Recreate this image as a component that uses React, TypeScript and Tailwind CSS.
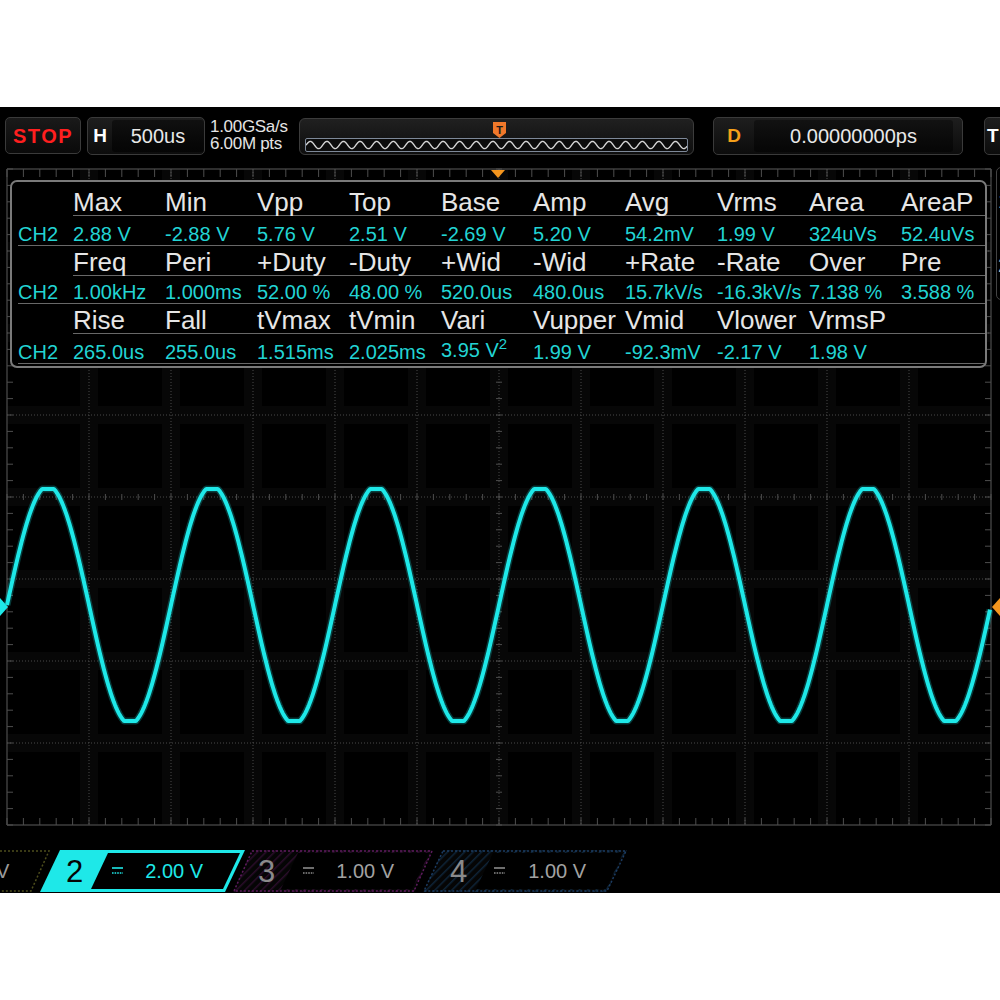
import React from "react";

const rows = [
  {
    h: ["Max", "Min", "Vpp", "Top", "Base", "Amp", "Avg", "Vrms", "Area", "AreaP"],
    v: ["2.88 V", "-2.88 V", "5.76 V", "2.51 V", "-2.69 V", "5.20 V", "54.2mV", "1.99 V", "324uVs", "52.4uVs"],
  },
  {
    h: ["Freq", "Peri", "+Duty", "-Duty", "+Wid", "-Wid", "+Rate", "-Rate", "Over", "Pre"],
    v: ["1.00kHz", "1.000ms", "52.00 %", "48.00 %", "520.0us", "480.0us", "15.7kV/s", "-16.3kV/s", "7.138 %", "3.588 %"],
  },
  {
    h: ["Rise", "Fall", "tVmax", "tVmin", "Vari", "Vupper", "Vmid", "Vlower", "VrmsP", ""],
    v: ["265.0us", "255.0us", "1.515ms", "2.025ms", "VARI", "1.99 V", "-92.3mV", "-2.17 V", "1.98 V", ""],
  },
];

function wavePath() {
  let d = "";
  for (let x = 7; x <= 990; x += 0.5) {
    const s = Math.sin((2 * Math.PI * (x - 7)) / 164);
    let y = 443 - 119 * s;
    y = Math.max(327, Math.min(559, y));
    d += (x === 7 ? "M" : "L") + x.toFixed(1) + " " + y.toFixed(1) + " ";
  }
  return d;
}

function zigzagPath() {
  let d = "";
  for (let x = 0; x <= 381; x += 0.5) {
    const y = 6 + 3.6 * Math.cos((2 * Math.PI * (x + 4)) / 16.6);
    d += (x === 0 ? "M" : "L") + x.toFixed(1) + " " + y.toFixed(2) + " ";
  }
  return d;
}

function DC({ color }: { color: string }) {
  return (
    <svg width="11" height="8" viewBox="0 0 11 8" className="shrink-0">
      <line x1="0" y1="1" x2="11" y2="1" stroke={color} strokeWidth="1.6" />
      <line x1="0" y1="6" x2="11" y2="6" stroke={color} strokeWidth="1.4" strokeDasharray="1.6 1" />
    </svg>
  );
}

function TopBar() {
  return (
    <div className="flex h-[55px] shrink-0 items-start pt-[10px]">
      <div className="ml-[5px] flex h-[37px] w-[76px] shrink-0 items-center justify-center rounded-[5px] border border-[#3a3a3a] bg-gradient-to-b from-[#1a1a1a] to-[#0a0a0a]">
        <span className="text-[20px] font-bold leading-none tracking-[1.5px] text-[#ff1f1f]">STOP</span>
      </div>
      <div className="ml-[6px] flex h-[38px] w-[118px] shrink-0 overflow-hidden rounded-[5px] border border-[#3a3a3a] bg-gradient-to-b from-[#1e1e1e] to-[#0c0c0c]">
        <div className="flex w-[24px] shrink-0 items-center justify-center text-[19px] font-bold text-white">H</div>
        <div className="my-[2px] flex flex-1 items-center justify-center rounded-[3px] bg-gradient-to-b from-[#101010] to-[#050505] text-[20px] text-[#e8e8e8]">
          500us
        </div>
      </div>
      <div className="ml-[5px] flex w-[89px] shrink-0 flex-col pt-[1px] text-[17px] leading-[17px] tracking-[-0.3px] text-[#e4e4e4]">
        <span>1.00GSa/s</span>
        <span>6.00M pts</span>
      </div>
      <div className="mt-[1px] flex h-[37px] w-[395px] shrink-0 flex-col rounded-[6px] border border-[#3c3c3c] bg-gradient-to-b from-[#202020] to-[#0e0e0e]">
        <div className="flex h-[19px] justify-center pt-[3px]">
          <svg width="13" height="16" viewBox="0 0 13 16" className="ml-[5px]">
            <polygon points="0,0 13,0 13,11 6.5,16 0,11" fill="#f0782a" />
            <text x="6.5" y="11.5" textAnchor="middle" fontSize="11" fontWeight="bold" fill="#1a1a1a" fontFamily="Liberation Sans, Arial, sans-serif">T</text>
          </svg>
        </div>
        <div className="mx-[5px] h-[14px] rounded-[2px] border border-[#7d8898] bg-[#0c0c0c]">
          <svg width="381" height="12" viewBox="0 0 381 12" className="block">
            <path d={zigzagPath()} fill="none" stroke="#d4d4d4" strokeWidth="1.4" />
          </svg>
        </div>
      </div>
      <div className="ml-[19px] flex h-[38px] w-[250px] shrink-0 overflow-hidden rounded-[5px] border border-[#3a3a3a] bg-gradient-to-b from-[#1e1e1e] to-[#0c0c0c]">
        <div className="flex w-[40px] shrink-0 items-center justify-center text-[19px] font-bold text-[#f5a01a]">D</div>
        <div className="my-[2px] flex w-[199px] items-center justify-center rounded-[3px] bg-gradient-to-b from-[#121212] to-[#060606] text-[20px] text-[#e8e8e8]">
          0.00000000ps
        </div>
      </div>
      <div className="ml-[21px] flex h-[38px] w-[40px] shrink-0 items-center rounded-[5px] border border-[#3a3a3a] bg-gradient-to-b from-[#1e1e1e] to-[#0c0c0c] pl-[2px] text-[19px] font-bold text-white">
        T
      </div>
    </div>
  );
}

function Panel() {
  return (
    <div className="relative z-10 ml-[10px] mt-[18px] w-[977px] rounded-[7px] border-2 border-[#7a7a7a] bg-black pb-[2px]">
      {rows.map((r, i) => (
        <React.Fragment key={i}>
          <div className={i === 0 ? "flex h-[34px]" : "flex h-[30px]"}>
            <div className="w-[61px] shrink-0" />
            <div className="grid flex-1 grid-cols-[repeat(9,92px)_1fr] items-end border-b border-[#686868] text-[26px] leading-[26px] text-[#e6e6e6]">
              {r.h.map((t, k) => (
                <div key={k} className="whitespace-nowrap">{t}</div>
              ))}
            </div>
          </div>
          <div
            className={
              i === 1
                ? "ml-[6px] grid h-[28px] grid-cols-[55px_repeat(9,92px)_1fr] items-end border-b border-[#686868] pb-[1px] text-[20px] leading-[20px] text-[#22d4d4]"
                : "ml-[6px] grid h-[30px] grid-cols-[55px_repeat(9,92px)_1fr] items-end border-b border-[#686868] pb-[1px] text-[20px] leading-[20px] text-[#22d4d4]"
            }
          >
            <div>CH2</div>
            {r.v.map((t, k) => (
              <div key={k} className="whitespace-nowrap">
                {t === "VARI" ? (
                  <>
                    3.95 V<span className="relative top-[-8px] text-[15px]">2</span>
                  </>
                ) : (
                  t
                )}
              </div>
            ))}
          </div>
        </React.Fragment>
      ))}
    </div>
  );
}

function Display() {
  const vx = Array.from({ length: 11 }, (_, i) => 7 + 82 * (i + 1));
  const hy = Array.from({ length: 7 }, (_, j) => 7 + 82 * (j + 1));
  const tx = Array.from({ length: 61 }, (_, k) => 7 + 16.4 * k);
  const ty = Array.from({ length: 41 }, (_, k) => 7 + 16.4 * k);
  const wd = wavePath();
  return (
    <div className="relative h-[683px] shrink-0">
      <svg className="absolute left-0 top-0" width="1000" height="683" viewBox="0 0 1000 683">
        {vx.map((x) => (
          <rect key={"bv" + x} x={x - 9} y={7} width={18} height={656} fill="#070707" />
        ))}
        {hy.map((y) => (
          <rect key={"bh" + y} x={7} y={y - 9} width={984} height={18} fill="#070707" />
        ))}
        {vx.map((x) => (
          <line key={"v" + x} x1={x} y1={7} x2={x} y2={663} stroke="#4a4a4a" strokeWidth="1" strokeDasharray="1 2" />
        ))}
        {hy.map((y) => (
          <line key={"h" + y} x1={7} y1={y} x2={991} y2={y} stroke="#4a4a4a" strokeWidth="1" strokeDasharray="1 2" />
        ))}
        <line x1={7} y1={7} x2={991} y2={7} stroke="#3e3e3e" strokeWidth="1.5" />
        <line x1={7} y1={663} x2={991} y2={663} stroke="#3e3e3e" strokeWidth="1.5" />
        <line x1={7} y1={7} x2={7} y2={663} stroke="#3e3e3e" strokeWidth="1.5" />
        <line x1={991} y1={7} x2={991} y2={663} stroke="#3e3e3e" strokeWidth="1.5" />
        {tx.map((x) => (
          <g key={"tx" + x}>
            <line x1={x} y1={7} x2={x} y2={15} stroke="#4e4e4e" strokeWidth="1" />
            <line x1={x} y1={656} x2={x} y2={663} stroke="#4e4e4e" strokeWidth="1" />
            <line x1={x} y1={332} x2={x} y2={338} stroke="#4e4e4e" strokeWidth="1" />
          </g>
        ))}
        {ty.map((y) => (
          <g key={"ty" + y}>
            <line x1={7} y1={y} x2={13} y2={y} stroke="#4e4e4e" strokeWidth="1" />
            <line x1={985} y1={y} x2={991} y2={y} stroke="#4e4e4e" strokeWidth="1" />
            <line x1={496} y1={y} x2={502} y2={y} stroke="#4e4e4e" strokeWidth="1" />
          </g>
        ))}
        <polygon points="491,8 505,8 498,16" fill="#f5961e" />
        <path d={wd} fill="none" stroke="#18e4e4" strokeWidth="7" strokeOpacity="0.25" strokeLinejoin="round" />
        <path d={wd} fill="none" stroke="#1ee8e8" strokeWidth="4" strokeLinejoin="round" />
        <polygon points="0,436 8,445 0,454" fill="#1ee8e8" />
        <polygon points="1000,436 992,445 1000,454" fill="#f5961e" />
      </svg>
      <Panel />
      <div className="absolute left-[996px] top-[5px] flex h-[133px] w-[40px] flex-col rounded-[5px] border border-[#444] pl-[1px] text-[20px] text-[#bbbbbb]">
        <div className="mt-[18px]">1</div>
        <div className="mt-[34px]">2</div>
      </div>
    </div>
  );
}

function Hatch({ id, line }: { id: string; line: string }) {
  return (
    <pattern id={id} width="6" height="6" patternUnits="userSpaceOnUse" patternTransform="rotate(45)">
      <rect width="6" height="6" fill="#050505" />
      <line x1="0" y1="0" x2="0" y2="6" stroke={line} strokeWidth="3" />
    </pattern>
  );
}

function ChannelBar() {
  return (
    <div className="flex h-[48px] shrink-0 items-start pt-[5px]">
      <div className="relative flex h-[42px] w-[50px] shrink-0 items-center">
        <svg className="absolute left-0 top-0" width="50" height="42" viewBox="0 0 50 42">
          <polyline points="0,1 49,1 31,41 0,41" fill="none" stroke="#4d4d1c" strokeWidth="1.5" strokeDasharray="2 2" />
        </svg>
        <span className="relative -ml-[4px] text-[20px] text-[#9a9a9a]">V</span>
      </div>
      <div className="relative -ml-[10px] flex h-[42px] w-[205px] shrink-0 items-center">
        <svg className="absolute left-0 top-0" width="205" height="42" viewBox="0 0 205 42">
          <polygon points="20,0 205,0 185,42 0,42" fill="#1ee8e8" />
          <polygon points="68,3 200,3 183,39 51,39" fill="#000" />
        </svg>
        <span className="relative ml-[26px] text-[31px] leading-none text-[#050505]">2</span>
        <span className="relative ml-[29px] flex">
          <DC color="#1ee8e8" />
        </span>
        <span className="relative ml-[22px] text-[20px] text-[#1ee8e8]">2.00 V</span>
      </div>
      <div className="relative -ml-[12px] flex h-[42px] w-[200px] shrink-0 items-center">
        <svg className="absolute left-0 top-0" width="200" height="42" viewBox="0 0 200 42">
          <defs>
            <Hatch id="hp" line="#2a0d2a" />
          </defs>
          <polygon points="19,0 200,0 181,42 0,42" fill="url(#hp)" />
          <polygon points="65,3 196,3 179,39 48,39" fill="#000" />
          <polygon points="19,1 199,1 181,41 1,41" fill="none" stroke="#5e1b5e" strokeWidth="1.5" strokeDasharray="2 2" />
        </svg>
        <span className="relative ml-[25px] text-[31px] leading-none text-[#8a8a8a]">3</span>
        <span className="relative ml-[28px] flex">
          <DC color="#8a8a8a" />
        </span>
        <span className="relative ml-[22px] text-[20px] text-[#a2a2a2]">1.00 V</span>
      </div>
      <div className="relative -ml-[10px] flex h-[42px] w-[204px] shrink-0 items-center">
        <svg className="absolute left-0 top-0" width="204" height="42" viewBox="0 0 204 42">
          <defs>
            <Hatch id="hb" line="#0e2438" />
          </defs>
          <polygon points="20,0 204,0 184,42 0,42" fill="url(#hb)" />
          <polygon points="70,3 200,3 183,39 53,39" fill="#000" />
          <polygon points="20,1 203,1 184,41 1,41" fill="none" stroke="#1b3c63" strokeWidth="1.5" strokeDasharray="2 2" />
        </svg>
        <span className="relative ml-[27px] text-[31px] leading-none text-[#8a8a8a]">4</span>
        <span className="relative ml-[27px] flex">
          <DC color="#8a8a8a" />
        </span>
        <span className="relative ml-[23px] text-[20px] text-[#a2a2a2]">1.00 V</span>
      </div>
    </div>
  );
}

export default function App() {
  return (
    <div className="h-[1000px] w-[1000px] overflow-hidden bg-white font-['Liberation_Sans',Arial,sans-serif]">
      <div className="h-[107px]" />
      <div className="flex h-[786px] flex-col overflow-hidden bg-black">
        <TopBar />
        <Display />
        <ChannelBar />
      </div>
    </div>
  );
}
